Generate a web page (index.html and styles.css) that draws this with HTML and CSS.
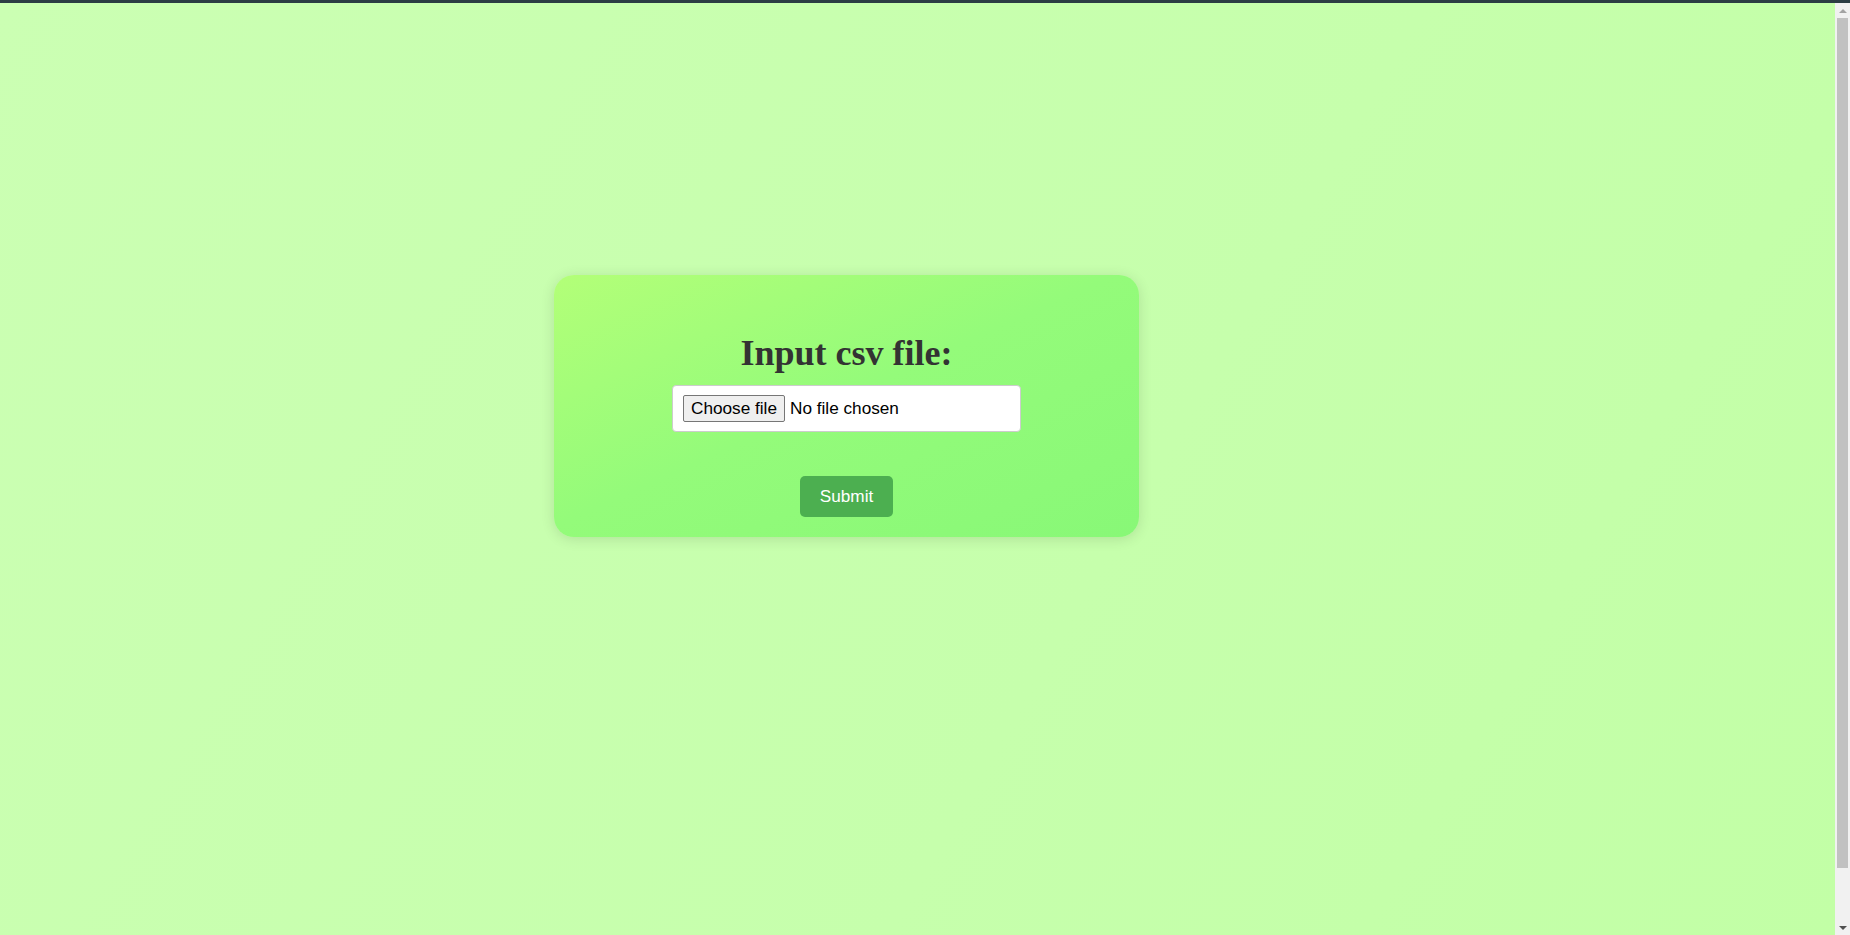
FILE: index.html
```html
<!DOCTYPE html>
<html lang="en">
<head>
<meta charset="utf-8">
<title>Input csv file</title>
<link rel="stylesheet" href="styles.css">
</head>
<body>
<div class="topbar"></div>
<div class="viewport">
  <div class="scroller">
    <main class="page">
      <form class="card" onsubmit="return false;">
        <h1 class="title">Input csv file:</h1>
        <label class="file-input">
          <input class="file-native" type="file" accept=".csv">
          <span class="file-btn">Choose file</span>
          <span class="file-name">No file chosen</span>
        </label>
        <button class="submit" type="submit">Submit</button>
      </form>
    </main>
  </div>
  <div class="scrollbar" aria-hidden="true">
    <div class="sb-button">
      <svg width="8" height="4" viewBox="0 0 8 4"><path d="M0 4 L4 0 L8 4 Z" fill="#a3a3a3"/></svg>
    </div>
    <div class="sb-track">
      <div class="sb-thumb"></div>
    </div>
    <div class="sb-button">
      <svg width="8" height="4" viewBox="0 0 8 4"><path d="M0 0 L8 0 L4 4 Z" fill="#505050"/></svg>
    </div>
  </div>
</div>
</body>
</html>
```
FILE: styles.css
```css
html, body {
  margin: 0;
  padding: 0;
  height: 100%;
  overflow: hidden;
}

body {
  display: flex;
  flex-direction: column;
  background: #2c3d44;
  font-family: "Liberation Sans", Arial, sans-serif;
}

.topbar {
  height: 3px;
  flex: 0 0 3px;
  background: #2c3d44;
}

.viewport {
  flex: 1 1 auto;
  min-height: 0;
  display: flex;
}

.scroller {
  flex: 1 1 auto;
  min-width: 0;
  overflow-y: auto;
  background: linear-gradient(120deg, #cbffb3 0%, #c6ffac 60%, #c2ffa6 100%);
}

.scrollbar {
  flex: 0 0 15px;
  width: 15px;
  display: flex;
  flex-direction: column;
  background: #f1f1f1;
}

.sb-button {
  flex: 0 0 15px;
  height: 15px;
  display: flex;
  align-items: center;
  justify-content: center;
}

.sb-button svg {
  display: block;
}

.sb-track {
  flex: 1 1 auto;
  padding: 0 2px;
}

.sb-thumb {
  height: 850px;
  background: #c1c1c1;
}

.page {
  box-sizing: border-box;
  min-height: 990px;
  padding-top: 272px;
  padding-left: 554px;
}

.card {
  box-sizing: border-box;
  width: 585px;
  padding: 57px 20px 20px;
  border-radius: 20px;
  background: linear-gradient(to bottom right, #b3ff78 0%, #94fb7a 48%, #88f877 100%);
  box-shadow: 0 2px 14px rgba(0, 0, 0, 0.12);
  display: flex;
  flex-direction: column;
  align-items: center;
}

.title {
  margin: 0 0 11px;
  font-family: "Liberation Serif", "Times New Roman", serif;
  font-weight: bold;
  font-size: 36px;
  line-height: 42px;
  color: #333333;
}

.file-input {
  box-sizing: border-box;
  width: 349px;
  height: 47px;
  padding: 9px 10px;
  border: 1px solid #cccccc;
  border-radius: 4px;
  background: #ffffff;
  display: flex;
  align-items: center;
  font-family: "Liberation Sans", Arial, sans-serif;
  font-size: 17.2px;
  color: #000000;
  cursor: pointer;
}

.file-native {
  display: none;
}

.file-btn {
  box-sizing: border-box;
  height: 27px;
  padding: 0 7px;
  margin-right: 5px;
  border: 1px solid #767676;
  border-radius: 2px;
  background: #efefef;
  color: #000000;
  line-height: 25px;
}

.file-name {
  line-height: 25px;
}

.submit {
  margin-top: 44px;
  height: 41px;
  padding: 0 20px;
  border: none;
  border-radius: 5px;
  background: #4caf50;
  color: #ffffff;
  font-family: "Liberation Sans", Arial, sans-serif;
  font-size: 17.2px;
  cursor: pointer;
}
```
